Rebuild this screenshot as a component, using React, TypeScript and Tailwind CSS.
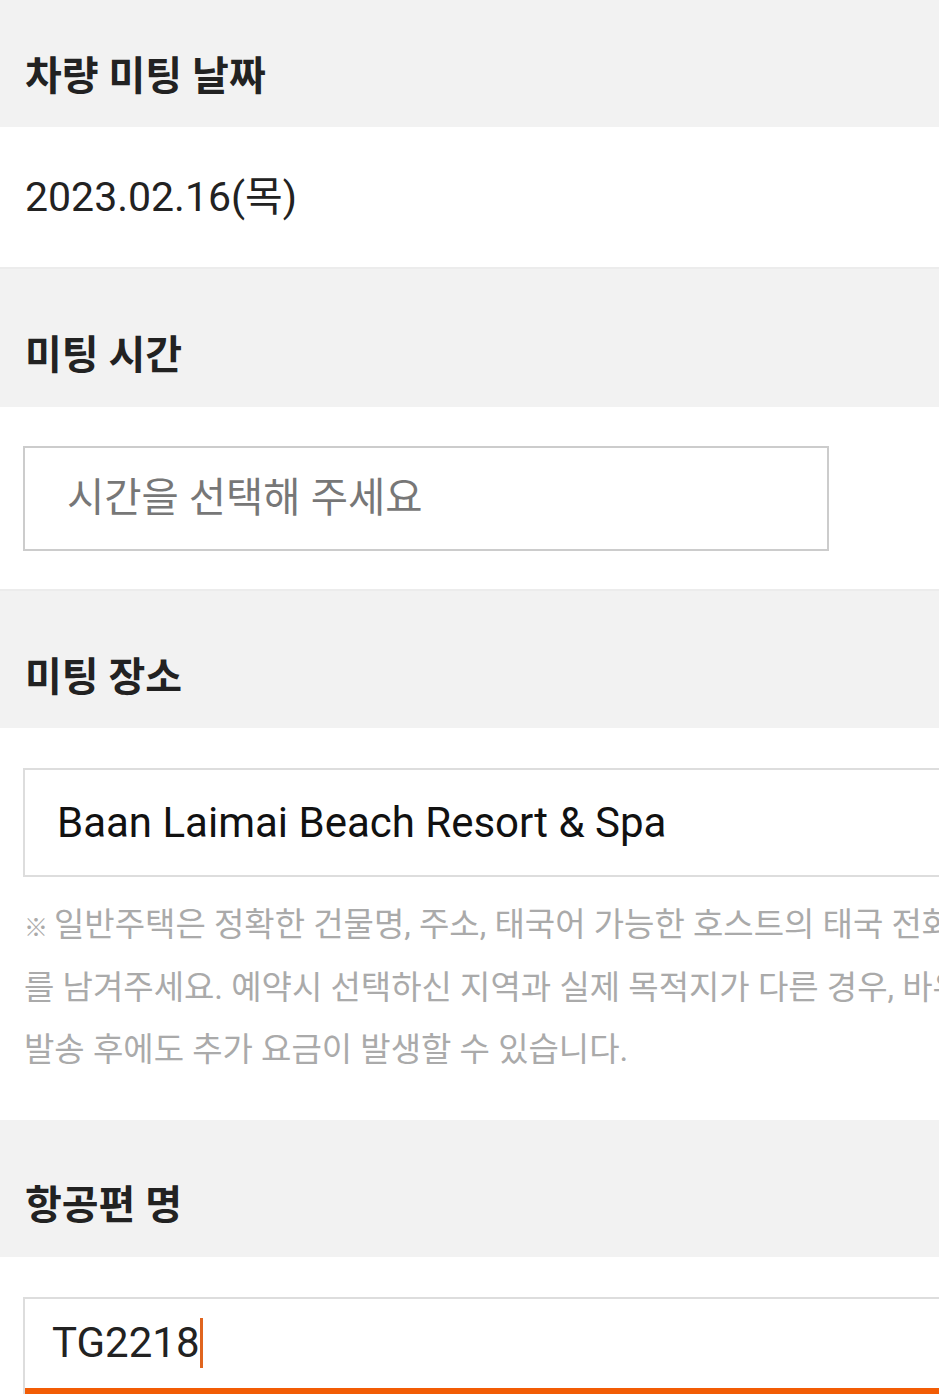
export default function App() {
  const font = { fontFamily: "Roboto, 'Noto Sans CJK KR', sans-serif" }

  const notice = [
    '일반주택은 정확한 건물명, 주소, 태국어 가능한 호스트의 태국 전화번호',
    '를 남겨주세요. 예약시 선택하신 지역과 실제 목적지가 다른 경우, 바우처',
    '발송 후에도 추가 요금이 발생할 수 있습니다.',
  ]

  return (
    <div className="w-full min-h-[1399px] overflow-hidden bg-white" style={font}>
      {/* 차량 미팅 날짜 */}
      <div className="h-[127px] bg-[#f2f2f2] px-[25px] pt-[26px] flex items-center">
        <h2 className="text-[40px] font-bold text-[#222] leading-none">차량 미팅 날짜</h2>
      </div>
      <div className="h-[142px] px-[25px] flex items-center border-b-2 border-[#ececec]">
        <span className="text-[41px] text-[#222] leading-none">2023.02.16(목)</span>
      </div>

      {/* 미팅 시간 */}
      <div className="h-[138px] bg-[#f2f2f2] px-[25px] pt-[36px] flex items-center">
        <h2 className="text-[40px] font-bold text-[#222] leading-none">미팅 시간</h2>
      </div>
      <div className="px-[23px] pt-[39px] pb-[38px] border-b-2 border-[#ececec]">
        <div className="w-[806px] h-[105px] border-2 border-[#cccccc] pl-[42px] flex items-center">
          <span className="text-[40.5px] text-[#777] leading-none">시간을 선택해 주세요</span>
        </div>
      </div>

      {/* 미팅 장소 */}
      <div className="h-[137px] bg-[#f2f2f2] px-[25px] pt-[36px] flex items-center">
        <h2 className="text-[40px] font-bold text-[#222] leading-none">미팅 장소</h2>
      </div>
      <div className="pl-[23px] pt-[40px] pb-[38px]">
        <div className="w-[1000px] h-[109px] border-2 border-[#dddddd] pl-[32px] flex items-center">
          <span className="text-[42px] text-[#111] leading-none whitespace-nowrap">
            Baan Laimai Beach Resort &amp; Spa
          </span>
        </div>
        <div className="pt-[17px] pl-[1px]">
          {notice.map((line, i) => (
            <p key={i} className="h-[62.5px] text-[33px] leading-[62.5px] text-[#aaaaaa] whitespace-nowrap">
              {i === 0 && <span className="text-[24px] leading-none mr-[6px]">※</span>}
              {line}
            </p>
          ))}
        </div>
      </div>

      {/* 항공편 명 */}
      <div className="h-[137px] bg-[#f2f2f2] px-[25px] pt-[36px] flex items-center">
        <h2 className="text-[40px] font-bold text-[#222] leading-none">항공편 명</h2>
      </div>
      <div className="pl-[23px] pt-[40px]">
        <div className="w-[1000px] h-[97px] border-2 border-b-0 border-[#dddddd] pl-[27px] pb-[6px] flex items-center shadow-[inset_0_-6px_0_#f25c05]">
          <span className="text-[42px] text-[#222] leading-none">TG2218</span>
          <span className="w-[3px] h-[50px] bg-[#e0651f]" />
        </div>
      </div>
    </div>
  )
}
